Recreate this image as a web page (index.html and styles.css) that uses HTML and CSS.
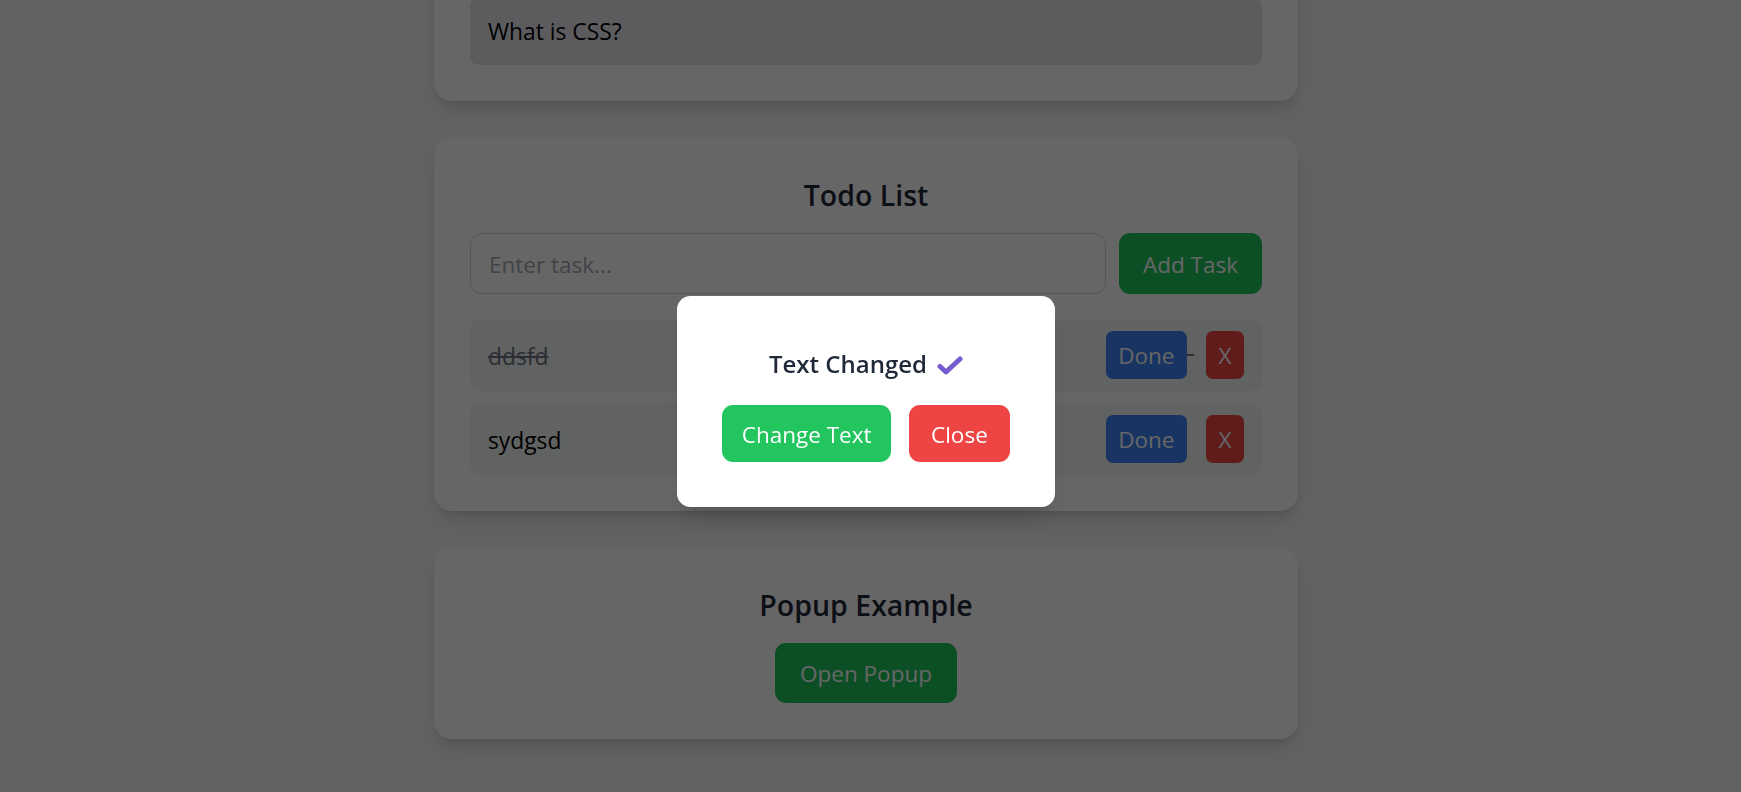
FILE: index.html
```html
<!DOCTYPE html>
<html lang="en">
<head>
<meta charset="utf-8">
<title>Components</title>
<link rel="stylesheet" href="styles.css">
</head>
<body>
<div class="page">
  <div class="container">
    <section class="card faq">
      <div class="faq-item active">What is CSS?</div>
    </section>

    <section class="card">
      <h2 class="card-title">Todo List</h2>
      <div class="todo-form">
        <input class="todo-input" type="text" placeholder="Enter task...">
        <button class="btn btn-green btn-add">Add Task</button>
      </div>
      <ul class="todo-list">
        <li class="todo-item">
          <span class="todo-text done">ddsfd</span>
          <div class="todo-actions">
            <button class="btn btn-blue btn-small">Done</button>
            <span class="sep sep-strike"></span>
            <button class="btn btn-red btn-small">X</button>
          </div>
        </li>
        <li class="todo-item">
          <span class="todo-text">sydgsd</span>
          <div class="todo-actions">
            <button class="btn btn-blue btn-small">Done</button>
            <span class="sep"></span>
            <button class="btn btn-red btn-small">X</button>
          </div>
        </li>
      </ul>
    </section>

    <section class="card popup-card">
      <h2 class="card-title">Popup Example</h2>
      <button class="btn btn-green btn-open">Open Popup</button>
    </section>
  </div>
</div>

<div class="overlay">
  <div class="modal">
    <h3 class="modal-title">Text Changed
      <svg class="check" width="26" height="20" viewBox="0 0 26 20" aria-hidden="true">
        <path d="M3 11.5 L9 17 L23 4" fill="none" stroke="#775bd0" stroke-width="5" stroke-linecap="round" stroke-linejoin="round"/>
      </svg>
    </h3>
    <div class="modal-actions">
      <button class="btn btn-green btn-modal btn-change">Change Text</button>
      <button class="btn btn-red btn-modal btn-close">Close</button>
    </div>
  </div>
</div>

<script src="script.js"></script>
</body>
</html>
```

FILE: styles.css
```css
html {
  scrollbar-width: none;
}
html::-webkit-scrollbar {
  display: none;
}
* {
  box-sizing: border-box;
}
body {
  margin: 0;
  background: #f3f4f6;
  font-family: "Open Sans", "Noto Sans", sans-serif;
  color: #000;
}
.page {
  padding: 36px 9px 80px 0;
}
.container {
  max-width: 864px;
  margin: 0 auto;
}
.card {
  background: #fff;
  border-radius: 18px;
  padding: 36px;
  margin-bottom: 36px;
  box-shadow: 0 11px 17px -3px rgba(0, 0, 0, 0.12), 0 4px 7px -4px rgba(0, 0, 0, 0.12);
}
.card-title {
  margin: 0 0 20px;
  padding-top: 4px;
  font-size: 28.5px;
  line-height: 36px;
  font-weight: 600;
  text-align: center;
  color: #1f2937;
}
.faq-item {
  background: #f3f4f6;
  border-radius: 9px;
  padding: 19px 18px 17px;
  font-size: 22.8px;
  line-height: 31.5px;
}
.faq-item.active {
  background: #e5e7eb;
}
.todo-form {
  display: flex;
  gap: 12.5px;
}
.todo-input {
  flex: 1;
  height: 61px;
  border: 1px solid #d1d5db;
  border-radius: 11px;
  padding: 3px 18px 0;
  font-family: inherit;
  font-size: 22.5px;
  background: #fff;
  outline: none;
}
.todo-input::placeholder {
  color: #a2a7b2;
}
.btn {
  border: none;
  font-family: inherit;
  font-size: 22.5px;
  color: #fff;
  cursor: pointer;
  display: inline-flex;
  align-items: center;
  justify-content: center;
  padding-top: 3px;
}
.btn-green {
  background: #22c55e;
}
.btn-blue {
  background: #3b82f6;
}
.btn-red {
  background: #ef4444;
}
.btn-add {
  height: 61px;
  padding-left: 24px;
  padding-right: 24px;
  border-radius: 11px;
}
.todo-list {
  list-style: none;
  margin: 25px 0 0;
  padding: 0;
  display: flex;
  flex-direction: column;
  gap: 12px;
}
.todo-item {
  display: flex;
  justify-content: space-between;
  align-items: center;
  background: #f3f4f6;
  border-radius: 11px;
  padding: 12px 18px;
}
.todo-text {
  font-size: 22.8px;
  line-height: 31.5px;
  padding-top: 4px;
}
.todo-text.done {
  text-decoration: line-through;
  color: #6b7280;
}
.todo-actions {
  display: flex;
  align-items: center;
}
.btn-small {
  height: 48px;
  padding-left: 12.5px;
  padding-right: 12.5px;
  border-radius: 7px;
}
.sep {
  width: 7px;
  height: 2px;
}
.sep-strike {
  background: #6b7280;
}
.todo-actions .btn-red {
  margin-left: 12px;
}
.popup-card {
  display: flex;
  flex-direction: column;
  align-items: center;
}
.popup-card .card-title {
  align-self: stretch;
}
.btn-open {
  height: 60px;
  padding-left: 25px;
  padding-right: 25px;
  border-radius: 11px;
}
.overlay {
  position: fixed;
  inset: 0;
  background: rgba(0, 0, 0, 0.6);
  display: flex;
  align-items: center;
  justify-content: center;
  padding: 10px 9px 0 0;
}
.modal {
  background: #fff;
  border-radius: 13.5px;
  padding: 45px;
  box-shadow: 0 20px 25px -5px rgba(0, 0, 0, 0.1), 0 8px 10px -6px rgba(0, 0, 0, 0.1);
  text-align: center;
}
.modal-title {
  margin: 0 0 19px;
  font-size: 24px;
  line-height: 45px;
  font-weight: 600;
  color: #1f2937;
  display: flex;
  align-items: center;
  justify-content: center;
}
.check {
  margin-left: 10px;
  margin-top: 4px;
}
.modal-actions {
  display: flex;
  gap: 18px;
  justify-content: center;
}
.btn-modal {
  height: 57px;
  border-radius: 11px;
}
.btn-change {
  padding-left: 19.5px;
  padding-right: 19.5px;
}
.btn-close {
  padding-left: 22px;
  padding-right: 22px;
}
```

FILE: script.js
```js
const faq = document.querySelector('.faq');
const bottom = faq.getBoundingClientRect().bottom + window.scrollY;
window.scrollTo(0, bottom - 100.5);
```
